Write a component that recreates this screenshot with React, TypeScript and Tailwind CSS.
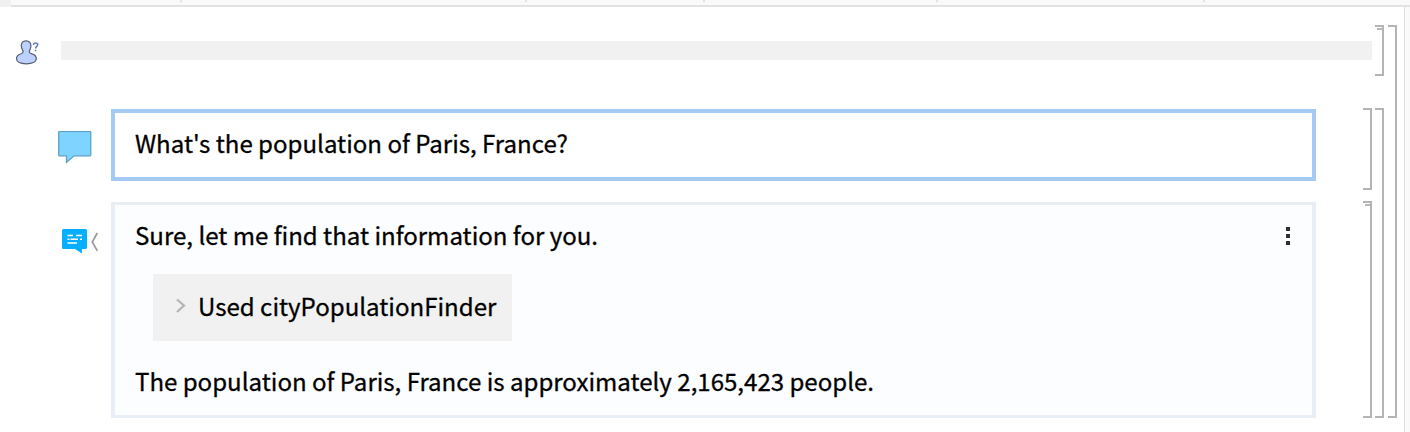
import React from "react";

function Bracket({ className, stub = false }: { className: string; stub?: boolean }) {
  return (
    <div className={`w-[9px] shrink-0 border-y-2 border-r-2 border-[#b4b4b4] ${className}`}>
      {stub && <div className="mt-px ml-[2px] h-[2px] bg-[#b8b8b8]" />}
    </div>
  );
}

function PersonIcon() {
  return (
    <svg className="ml-[15px] mt-[32px] h-[28px] w-[26px] shrink-0" viewBox="0 0 26 28">
      <path
        d="M11 1.800C7.800 1.800 6.300 4 6.300 6.700c0 2.700 1.200 3.900 1.700 5.300.4 1.300-.4 2.200-2 2.700C3 15.600 1.500 17.300 1.500 19.600c0 3.400 4 5.200 9.800 5.200s10-1.800 10-5.200c0-2.300-1.700-4-4.900-4.900-1.600-.5-2.400-1.400-2-2.700.5-1.400 1.500-2.600 1.500-5.300 0-2.700-1.500-4.900-4.900-4.900Z"
        fill="#bdd1ff"
        stroke="#555e70"
        strokeWidth="1.200"
      />
      <path d="M18.500 6c.1-1.500.9-2.100 2-2.100 1.300 0 2.200.7 2.200 1.900 0 1.700-2.100 1.600-2.100 3.800M20.500 17.500" fill="none" stroke="#6179b7" strokeWidth="1.500" />
      <path d="M20.600 10.700v1.500" stroke="#6179b7" strokeWidth="1.600" />
    </svg>
  );
}

function InputIcon() {
  return (
    <svg className="ml-[58px] mt-[22px] h-[33px] w-[34px] shrink-0" viewBox="0 0 34 33">
      <path
        d="M1.500.5h30.500q.8 0 .8.800v22.700q0 .8-.8.800H16L8.500 31.400V24.800H1.500q-.8 0-.8-.8V1.300q0-.8.8-.8Z"
        fill="#7fd3ff"
        stroke="#5a9ec8"
        strokeWidth="1.200"
      />
    </svg>
  );
}

function OutputIcon() {
  return (
    <svg className="ml-[62px] mt-[27px] h-[26px] w-[37px] shrink-0" viewBox="0 0 37 26">
      <path d="M1.500 0h22Q25 0 25 1.500v17Q25 20 23.500 20H20v4.500L13 20H1.500Q0 20 0 18.500v-17Q0 0 1.500 0Z" fill="#06afff" />
      <path d="M5.500 6.500h5.500M14 6.500h6M5.500 10.300h2M8.500 10.300h7.500M18 10.300h2M5.500 14h9.500" stroke="#fff" strokeWidth="1.500" />
      <path d="m35.300 4-5 9 5 8.800" fill="none" stroke="#999" strokeWidth="1.700" />
    </svg>
  );
}

const TICKS = ["w-[171px]", "w-[345px]", "w-[178px]", "w-[233px]", "w-[267px]"];

export default function App() {
  return (
    <div className="flex h-[432px] w-[1410px] flex-col overflow-hidden bg-white font-['Noto_Sans_CJK_SC','Noto_Sans',sans-serif] text-[24.050px] leading-[36px] text-black [-webkit-text-stroke:0.3px_black]">
      <header className="flex h-[7px] shrink-0">
        <div className="w-[11px] shrink-0 bg-[#f0f0f0]" />
        <div className="flex flex-1 border-b-2 border-[#e2e2e2] bg-[#f9f9f9]">
          {TICKS.map((w) => (
            <div key={w} className={`h-[2px] shrink-0 border-r-2 border-[#e2e2e2] ${w}`} />
          ))}
        </div>
      </header>
      <div className="flex min-h-0 flex-1">
        <main className="flex w-[1316px] shrink-0 flex-col">
          <div className="flex h-[102px] shrink-0">
            <PersonIcon />
            <div className="ml-[20px] mt-[34px] h-[19px] w-[1311px] shrink-0 bg-[#f1f1f1]" />
          </div>
          <section className="flex h-[93px] shrink-0">
            <InputIcon />
            <div className="ml-[19px] flex h-[72px] w-[1205px] shrink-0 items-center whitespace-nowrap border-4 border-[#a5caf3] bg-white pb-[4px] pl-[20px]">
              What's the population of Paris, France?
            </div>
          </section>
          <section className="flex h-[216px] shrink-0">
            <OutputIcon />
            <div className="ml-[12px] flex h-[216px] w-[1205px] shrink-0 justify-between whitespace-nowrap border-x-4 border-y-[3px] border-[#e9eef6] bg-[#fcfdff] pl-[20px]">
              <div className="pt-[12px]">
                <p>Sure, let me find that information for you.</p>
                <div className="ml-[18px] mt-[21px] flex h-[67px] w-[359px] items-center bg-[#f1f1f1] pb-[3px] pl-[22px]">
                  <svg className="mr-[11px] h-[16px] w-[12px] shrink-0" viewBox="0 0 12 16">
                    <path d="m2 1.500 7 6-7 6.500" fill="none" stroke="#b3b3b3" strokeWidth="2.200" />
                  </svg>
                  <span>Used cityPopulationFinder</span>
                </div>
                <p className="mt-[22px]">The population of Paris, France is approximately 2,165,423 people.</p>
              </div>
              <div className="mr-[22px] mt-[22px] flex flex-col gap-[3px]">
                <div className="size-[4px] bg-[#303030]" />
                <div className="size-[4px] bg-[#303030]" />
                <div className="size-[4px] bg-[#303030]" />
              </div>
            </div>
          </section>
        </main>
        <aside className="flex w-[88px] shrink-0 gap-[3.500px] pl-[46.500px] pt-[18px]">
          <div className="mt-[83px] flex flex-col gap-[11px]">
            <Bracket className="h-[82px]" />
            <Bracket className="h-[217px]" stub />
          </div>
          <div className="flex flex-col gap-[32px]">
            <Bracket className="h-[51px]" stub />
            <Bracket className="h-[310px]" />
          </div>
          <Bracket className="h-[393px]" />
        </aside>
        <div className="flex-1 border-l border-[#dedede] bg-[#f9f9f9]" />
      </div>
    </div>
  );
}
